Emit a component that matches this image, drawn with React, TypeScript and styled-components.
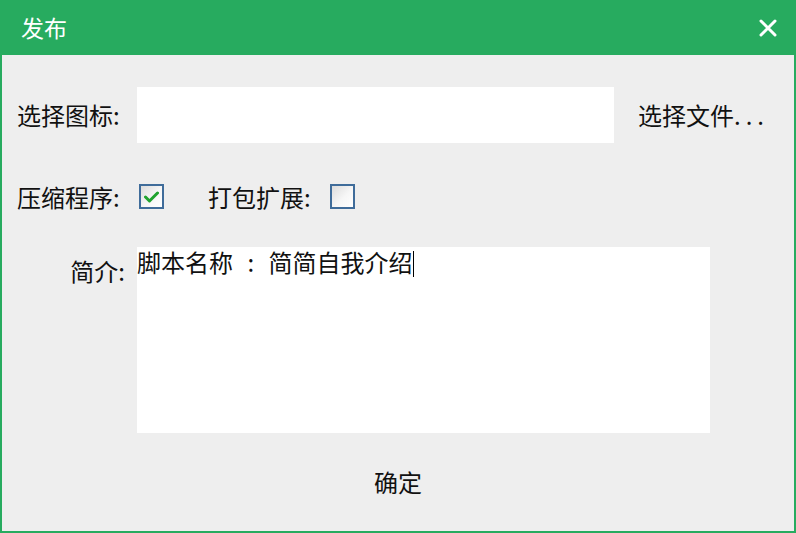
import React from "react";
import styled, { createGlobalStyle } from "styled-components";

const GREEN = "#27ab5f";

const Global = createGlobalStyle`
  html, body { margin: 0; padding: 0; background: #eeeeee; }
  body { font-family: "Noto Sans CJK SC", "Noto Sans", sans-serif; }
  * { box-sizing: border-box; }
`;

const Window = styled.div`
  width: 796px;
  height: 533px;
  display: flex;
  flex-direction: column;
`;

const TitleBar = styled.div`
  height: 55px;
  flex: none;
  background: ${GREEN};
  display: flex;
  align-items: center;
  justify-content: space-between;
  padding: 0 16px 0 21px;
  color: #fff;
`;

const Title = styled.div`
  font-size: 23px;
  line-height: 1;
`;

const Close = styled.button`
  width: 24px;
  height: 24px;
  border: none;
  background: transparent;
  padding: 0;
  display: flex;
  align-items: center;
  justify-content: center;
  cursor: pointer;
`;

const Body = styled.div`
  flex: 1;
  background: #eeeeee;
  border: 2px solid ${GREEN};
  border-top: none;
  display: flex;
  flex-direction: column;
  padding: 32px 0 0 15px;
  color: #111;
  font-size: 24px;
`;

const Row = styled.div<{ $top?: number }>`
  display: flex;
  align-items: center;
  margin-top: ${(p) => p.$top ?? 0}px;
`;

const Label = styled.div<{ $width?: number }>`
  width: ${(p) => p.$width ?? 120}px;
  flex: none;
  white-space: nowrap;
  line-height: 1;
`;

const Input = styled.div`
  width: 477px;
  height: 56px;
  background: #fff;
`;

const FileButton = styled.div`
  margin-left: 24px;
  line-height: 1;
  white-space: nowrap;
`;

const Dots = styled.span`
  letter-spacing: 5px;
`;

const Check = styled.div`
  width: 25px;
  height: 25px;
  flex: none;
  border: 2px solid #3f6c9a;
  background: linear-gradient(135deg, #dcdcdc 0%, #f6f6f6 55%, #ffffff 100%);
  display: flex;
  align-items: center;
  justify-content: center;
  margin-left: 1px;
`;

const Spacer = styled.div<{ $w: number }>`
  width: ${(p) => p.$w}px;
  flex: none;
`;

const IntroRow = styled.div`
  display: flex;
  align-items: flex-start;
  margin-top: 38px;
`;

const IntroLabel = styled.div`
  width: 120px;
  flex: none;
  text-align: right;
  padding-right: 12px;
  padding-top: 12px;
  line-height: 1;
  white-space: nowrap;
`;

const TextArea = styled.div`
  width: 573px;
  height: 186px;
  background: #fff;
  padding-top: 0;
  line-height: 30px;
  white-space: pre;
  word-spacing: 9px;
`;

const Caret = styled.span`
  display: inline-block;
  width: 1px;
  height: 26px;
  background: #000;
  vertical-align: -5px;
  margin-left: 1px;
`;

const Footer = styled.div`
  display: flex;
  justify-content: center;
  margin-left: -15px;
  margin-top: 37px;
`;

const OkButton = styled.button`
  border: none;
  background: transparent;
  font: inherit;
  font-size: 24px;
  color: #111;
  padding: 0;
  line-height: 1;
  cursor: pointer;
`;

export default function App() {
  return (
    <>
      <Global />
      <Window>
        <TitleBar>
          <Title>发布</Title>
          <Close aria-label="关闭">
            <svg width="18" height="18" viewBox="0 0 18 18">
              <path d="M2 2 L16 16 M16 2 L2 16" stroke="#fff" strokeWidth="3" strokeLinecap="round" />
            </svg>
          </Close>
        </TitleBar>
        <Body>
          <Row>
            <Label>选择图标:</Label>
            <Input />
            <FileButton>
              选择文件<Dots>...</Dots>
            </FileButton>
          </Row>
          <Row $top={41}>
            <Label $width={121}>压缩程序:</Label>
            <Check>
              <svg width="15" height="12" viewBox="0 0 15 12">
                <path d="M1.5 6 L5.5 10 L13.5 2" stroke="#1fa32e" strokeWidth="3" fill="none" strokeLinecap="round" strokeLinejoin="round" />
              </svg>
            </Check>
            <Spacer $w={44} />
            <Label $width={121}>打包扩展:</Label>
            <Check />
          </Row>
          <IntroRow>
            <IntroLabel>简介:</IntroLabel>
            <TextArea>
              脚本名称 : 简简自我介绍<Caret />
            </TextArea>
          </IntroRow>
          <Footer>
            <OkButton>确定</OkButton>
          </Footer>
        </Body>
      </Window>
    </>
  );
}
